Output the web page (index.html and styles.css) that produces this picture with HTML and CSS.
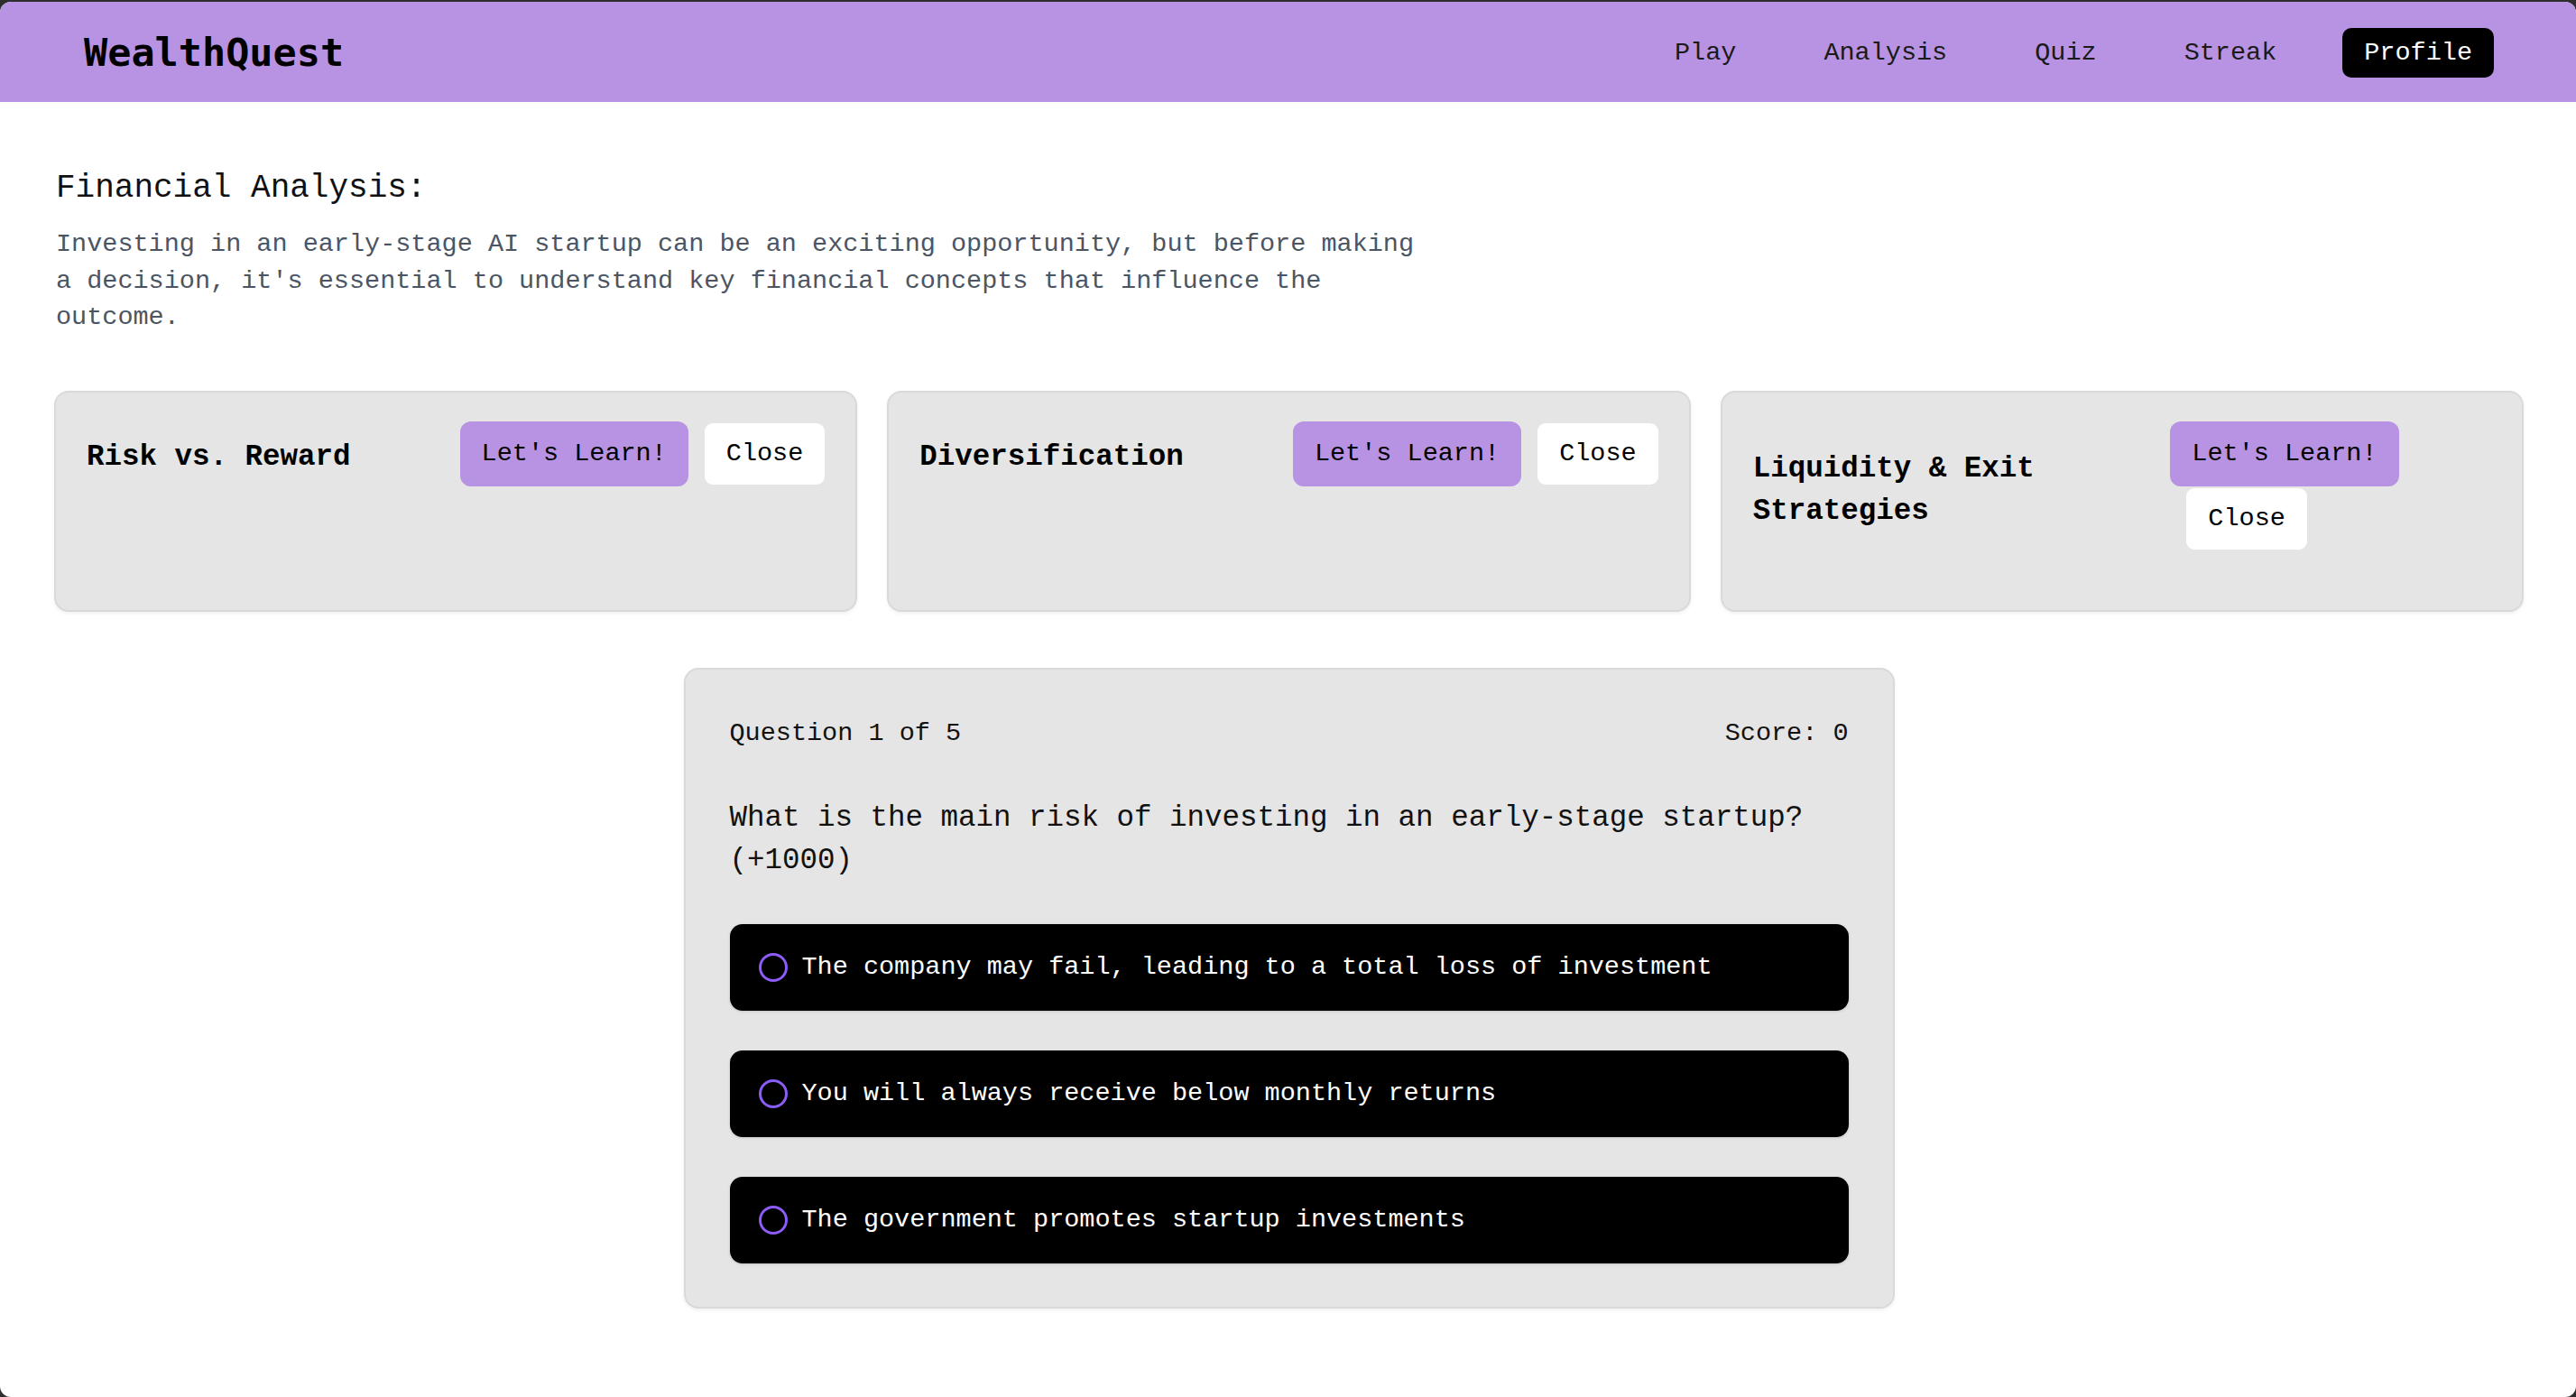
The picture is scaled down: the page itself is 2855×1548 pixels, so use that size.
FILE: index.html
```html
<!DOCTYPE html>
<html lang="en">
<head>
<meta charset="utf-8">
<title>WealthQuest</title>
<link rel="stylesheet" href="styles.css">
</head>
<body>
<div class="window">
  <header class="navbar">
    <div class="logo">WealthQuest</div>
    <nav class="nav">
      <a class="nav-link">Play</a>
      <a class="nav-link">Analysis</a>
      <a class="nav-link">Quiz</a>
      <a class="nav-link">Streak</a>
      <a class="nav-link active">Profile</a>
    </nav>
  </header>
  <main class="content">
    <section class="analysis">
      <h2 class="analysis-title">Financial Analysis:</h2>
      <p class="analysis-text">Investing in an early-stage AI startup can be an exciting opportunity, but before making a decision, it's essential to understand key financial concepts that influence the outcome.</p>
    </section>
    <section class="topics">
      <div class="topic">
        <div class="topic-row">
          <h3 class="topic-title">Risk vs. Reward</h3>
          <div class="actions"><button class="btn learn">Let's Learn!</button><button class="btn close">Close</button></div>
        </div>
      </div>
      <div class="topic">
        <div class="topic-row">
          <h3 class="topic-title">Diversification</h3>
          <div class="actions"><button class="btn learn">Let's Learn!</button><button class="btn close">Close</button></div>
        </div>
      </div>
      <div class="topic">
        <div class="topic-row">
          <h3 class="topic-title">Liquidity &amp; Exit Strategies</h3>
          <div class="actions"><button class="btn learn">Let's Learn!</button><button class="btn close">Close</button></div>
        </div>
      </div>
    </section>
    <section class="quiz">
      <div class="quiz-head"><span>Question 1 of 5</span><span>Score: 0</span></div>
      <p class="question">What is the main risk of investing in an early-stage startup? (+1000)</p>
      <div class="options">
        <label class="option"><span class="radio"></span><span>The company may fail, leading to a total loss of investment</span></label>
        <label class="option"><span class="radio"></span><span>You will always receive below monthly returns</span></label>
        <label class="option"><span class="radio"></span><span>The government promotes startup investments</span></label>
      </div>
    </section>
  </main>
</div>
</body>
</html>
```

FILE: styles.css
```css
html {
  background: #2e2e2e;
}
body {
  margin: 0;
  font-family: "Liberation Mono", "DejaVu Sans Mono", monospace;
  color: #111;
}
.window {
  margin-top: 2px;
  height: calc(100vh - 2px);
  background: #fff;
  border-radius: 12px;
  overflow: hidden;
}
.navbar {
  height: 111px;
  background: #b893e4;
  display: flex;
  align-items: center;
  justify-content: space-between;
  padding: 0 91px 0 93px;
}
.logo {
  font-family: "DejaVu Sans Mono", monospace;
  font-weight: bold;
  font-size: 43.5px;
  color: #000;
}
.nav {
  display: flex;
  align-items: center;
  gap: 49px;
  margin-top: 1px;
}
.nav-link {
  font-size: 28.5px;
  line-height: 55px;
  padding: 0 24px;
  color: #1a1a1a;
  border-radius: 10px;
}
.nav-link.active {
  background: #000;
  color: #fff;
}
.content {
  padding: 0 58px 0 60px;
}
.analysis-title {
  font-weight: normal;
  font-size: 36px;
  line-height: 47px;
  margin: 72px 0 0 2px;
  color: #111;
}
.analysis-text {
  font-size: 28.5px;
  line-height: 40.5px;
  max-width: 1525px;
  margin: 19px 0 0 2px;
  color: #4b5563;
}
.topics {
  display: grid;
  grid-template-columns: repeat(3, 1fr);
  gap: 33px;
  margin-top: 60px;
}
.topic {
  background: #e5e5e5;
  border: 2px solid #d9d9d9;
  border-radius: 16px;
  box-shadow: 0 2px 4px rgba(0, 0, 0, 0.06);
  padding: 32px 34px 65px;
}
.topic-row {
  display: flex;
  align-items: center;
  justify-content: space-between;
}
.topic-title {
  font-size: 32.5px;
  line-height: 47px;
  font-weight: bold;
  margin: 8px 0 0;
  color: #000;
}
.actions {
  display: flex;
  flex-wrap: wrap;
  align-items: center;
}
.btn {
  font-family: "Liberation Mono", "DejaVu Sans Mono", monospace;
  font-size: 28.5px;
  border: 0;
  padding: 0 24px;
  color: #000;
  cursor: pointer;
}
.learn {
  height: 72px;
  background: #b893e4;
  border-radius: 12px;
}
.close {
  height: 68px;
  background: #fff;
  border-radius: 9px;
  margin: 2px 0 2px 18px;
}
.quiz {
  width: 1240px;
  margin: 62px auto 0;
  background: #e5e5e5;
  border: 2px solid #d9d9d9;
  border-radius: 16px;
  box-shadow: 0 2px 4px rgba(0, 0, 0, 0.06);
  padding: 51px 49px 48px;
}
.quiz-head {
  display: flex;
  justify-content: space-between;
  font-size: 28.5px;
  line-height: 40px;
  color: #111;
}
.question {
  font-size: 32.5px;
  line-height: 47px;
  margin: 50px 0 0;
  color: #111;
}
.options {
  display: flex;
  flex-direction: column;
  gap: 44px;
  margin-top: 47px;
}
.option {
  height: 96px;
  background: #000;
  color: #fff;
  border-radius: 14px;
  padding: 0 32px;
  display: flex;
  align-items: center;
  gap: 16px;
  font-size: 28.5px;
  box-shadow: 0 1px 3px rgba(0, 0, 0, 0.15);
}
.radio {
  width: 26px;
  height: 26px;
  border: 3px solid #8b5cf6;
  border-radius: 50%;
  flex: none;
}
```
